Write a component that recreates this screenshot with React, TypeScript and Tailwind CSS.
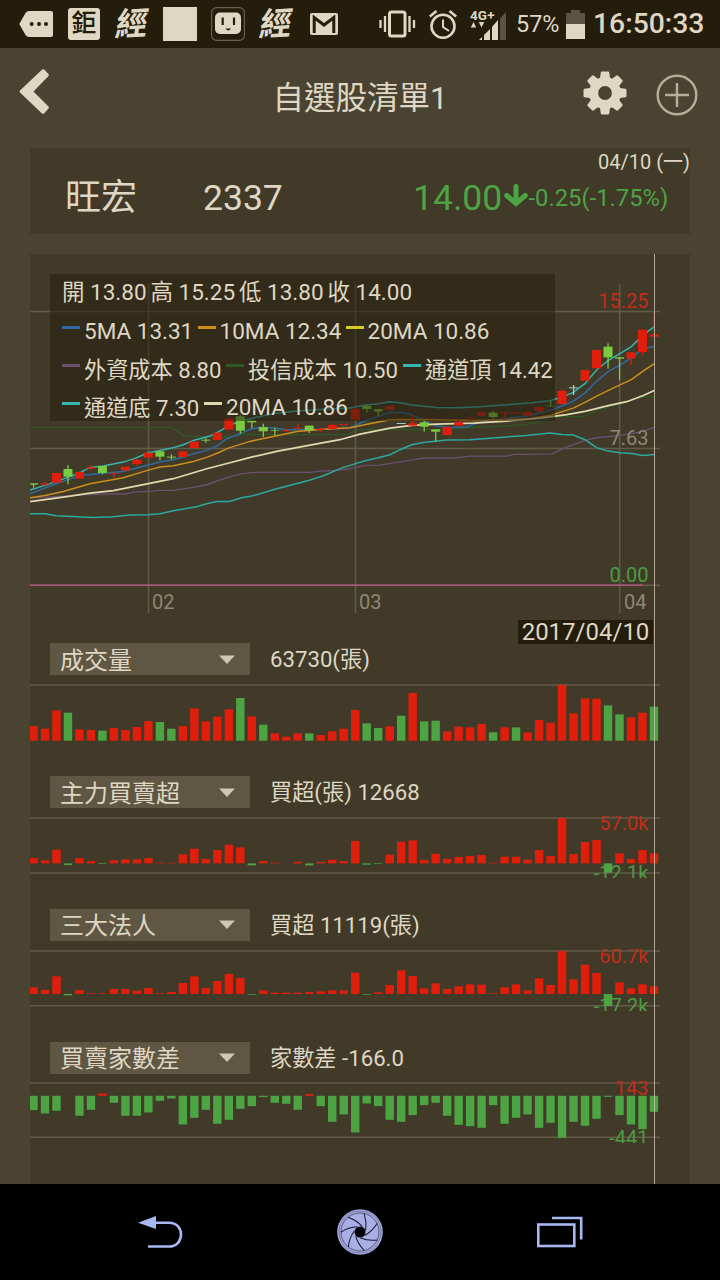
import React from "react";

type Point = [number, number];
type Candle = [color: string, bodyTop: number, bodyBottom: number, high?: number, low?: number];

const FIRST_X = 3.5;
const STEP = 11.49;
const slotX = (i: number) => FIRST_X + i * STEP;

const R = "#df1f0c";
const G = "#7acb42";
const P = "#9fcfc0";

// Winter candles and spring candles use their own vertical origin, in third-pixel units.
const WINTER: Candle[] = [
  [G, 265, 269, 265, 278], [R, 265, 268, 262, 273], [R, 234, 263], [G, 222, 245, 210, 268],
  [R, 231, 251, 229, 251], [R, 217, 221, 212, 227], [G, 213, 234, 213, 238], [R, 235, 237, 232, 247],
  [R, 215, 227], [R, 194, 207, 192, 212], [R, 173, 188], [G, 169, 185, 167, 196],
  [G, 185, 188, 178, 193], [R, 169, 186], [R, 140, 159], [G, 134, 137, 130, 143],
  [R, 113, 135], [R, 70, 104], [G, 64, 107, 60, 116], [G, 77, 82, 77, 100],
  [G, 96, 109, 86, 126], [G, 105, 107, 98, 121], [R, 105, 107, 102, 110], [R, 98, 100, 86, 108],
  [G, 92, 106, 92, 114], [R, 102, 105, 99, 110], [R, 90, 102, 87, 103], [R, 88, 91],
];
const SPRING: Candle[] = [
  [R, 386, 419], [G, 378, 387, 375, 397], [G, 388, 394, 388, 408], [R, 378, 389],
  [P, 429, 432], [R, 430, 437, 404, 437], [G, 427, 440, 422, 455], [G, 448, 455, 448, 486],
  [R, 441, 465], [R, 427, 437, 416, 437], [R, 412, 414, 411, 423], [R, 397, 407, 392, 410],
  [G, 398, 411, 394, 415], [R, 396, 399, 396, 414], [R, 397, 400], [R, 396, 407, 392, 412],
  [R, 381, 394, 376, 397], [G, 377, 379, 362, 379], [R, 333, 372, 328, 372], [P, 322, 325, 315, 345],
  [R, 270, 302], [R, 210, 265], [G, 200, 232, 190, 266], [G, 232, 236, 232, 300],
  [R, 217, 235, 217, 255], [R, 149, 216, 149, 225], [R, 163, 170, 95, 170],
];
const CANDLES: Candle[] = [
  ...WINTER.map((c) => [c[0], ...c.slice(1).map((v) => (v as number) + 345)] as Candle),
  ...SPRING,
];

const LINES: { color: string; width: number; winter: Point[]; spring: Point[] }[] = [
  {
    color: "#2d5a24", width: 1.2,
    winter: [[30, 97], [455, 97], [490, 119], [520, 124], [640, 124], [670, 118], [975, 118], [990, 113]],
    spring: [[60, 448], [150, 448], [300, 447], [420, 440], [560, 433], [650, 409], [735, 408], [770, 390], [840, 370], [908, 350], [943, 349]],
  },
  {
    color: "#6b5072", width: 1.4,
    winter: [[30, 308], [130, 302], [220, 297], [320, 295], [345, 290], [400, 287], [420, 285], [460, 285], [520, 276], [560, 268], [620, 247], [660, 236], [700, 231], [870, 231], [900, 227], [950, 225], [990, 220]],
    spring: [[75, 555], [120, 554], [250, 533], [340, 533], [390, 527], [500, 527], [525, 522], [635, 521], [670, 504], [700, 493], [735, 480], [770, 472], [840, 465], [900, 455], [943, 441]],
  },
  {
    color: "#2ba9a2", width: 1.5,
    winter: [[30, 355], [75, 355], [108, 361], [220, 366], [280, 364], [330, 359], [385, 358], [420, 355], [460, 346], [530, 334], [560, 325], [590, 318], [628, 318], [665, 307], [695, 302], [770, 280], [860, 257], [910, 241], [970, 216], [990, 210]],
    spring: [[75, 541], [115, 532], [150, 523], [180, 508], [215, 493], [250, 486], [320, 479], [390, 478], [430, 475], [560, 465], [630, 458], [665, 462], [700, 464], [735, 478], [770, 502], [805, 512], [840, 517], [875, 519], [908, 525], [943, 522]],
  },
  {
    color: "#35b5ae", width: 1.5,
    winter: [[30, 284], [75, 270], [110, 258], [180, 232], [210, 216], [250, 212], [310, 200], [345, 189], [385, 172], [420, 165], [455, 158], [490, 148], [520, 135], [570, 122], [605, 104], [630, 88], [690, 70], [760, 55], [830, 47], [900, 42], [990, 38]],
    spring: [[75, 374], [115, 370], [150, 364], [180, 367], [215, 374], [290, 381], [360, 382], [420, 379], [500, 373], [570, 368], [630, 361], [665, 350], [700, 336], [735, 310], [770, 268], [805, 240], [840, 220], [875, 198], [908, 165], [943, 139]],
  },
  {
    color: "#2f6ba0", width: 1.5,
    winter: [[30, 295], [100, 268], [180, 240], [240, 234], [310, 228], [350, 218], [385, 209], [420, 200], [455, 194], [490, 185], [520, 175], [560, 165], [590, 152], [620, 130], [660, 115], [690, 102], [720, 96], [765, 98], [800, 104], [850, 102], [900, 102], [990, 97]],
    spring: [[80, 420], [115, 408], [150, 396], [185, 396], [215, 403], [250, 420], [290, 437], [330, 441], [380, 440], [400, 432], [430, 424], [500, 414], [570, 405], [640, 387], [700, 362], [735, 338], [770, 302], [805, 273], [840, 254], [875, 232], [908, 205], [943, 198]],
  },
  {
    color: "#cc8f1c", width: 1.5,
    winter: [[30, 307], [75, 300], [130, 288], [210, 265], [310, 247], [385, 224], [420, 215], [460, 211], [520, 198], [560, 186], [595, 172], [625, 158], [690, 138], [760, 123], [830, 108], [900, 102], [990, 97]],
    spring: [[100, 428], [150, 418], [185, 417], [290, 418], [400, 420], [500, 418], [570, 414], [630, 405], [700, 383], [735, 366], [770, 347], [805, 330], [875, 297], [908, 273], [943, 250]],
  },
  {
    color: "#e3d9b0", width: 1.7,
    winter: [[30, 319], [130, 305], [210, 293], [280, 286], [385, 265], [460, 250], [560, 220], [630, 202], [700, 184], [770, 168], [870, 149], [960, 133]],
    spring: [[60, 461], [150, 443], [215, 435], [290, 431], [400, 428], [500, 422], [600, 413], [680, 403], [735, 393], [805, 376], [860, 364], [908, 346], [943, 330]],
  },
];

const linePoints = (winter: Point[], spring: Point[]) =>
  [
    ...winter.map(([x, y]) => [x / 3 - 10, (y + 345) / 3 + 26]),
    ...spring.map(([x, y]) => [x / 3 + 310, y / 3 + 26]),
  ]
    .map(([x, y]) => `${x.toFixed(1)},${(y + 0.4).toFixed(1)}`)
    .join(" ");

function PriceChart() {
  return (
    <svg width="660" height="366" viewBox="0 0 660 366" className="block">
      <g stroke="#625b48" strokeWidth="1.5">
        <path d="M0 57.500H630M0 194.500H630M0 331.300H630" />
        <path d="M118.500 30V359M325.500 30V359M589.700 30V359" />
      </g>
      {LINES.map((l, i) => (
        <polyline key={i} points={linePoints(l.winter, l.spring)} fill="none" stroke={l.color} strokeWidth={l.width} />
      ))}
      {CANDLES.map(([color, top, bottom, high, low], i) => (
        <g key={i} fill={color}>
          <rect x={slotX(i) - 4.5} width="9" y={top / 3 + 26} height={(bottom - top) / 3} />
          {high !== undefined && low !== undefined && (
            <rect x={slotX(i) - 0.6} width="1.3" y={high / 3 + 26} height={(low - high) / 3} />
          )}
        </g>
      ))}
      <path d="M0 331.300H613" stroke="#b3577c" strokeWidth="1.5" />
      <g fontSize="20" textAnchor="end">
        <text x="618.500" y="53.500" fill="#c22d18">15.25</text>
        <text x="618.500" y="191" fill="#8f8774">7.63</text>
        <text x="618.500" y="327.500" fill="#4d9a43">0.00</text>
      </g>
      <g fontSize="20" fill="#8f8774">
        <text x="122" y="354.500">02</text>
        <text x="329" y="354.500">03</text>
        <text x="594" y="354.500">04</text>
      </g>
    </svg>
  );
}

type Study = {
  name: string;
  value: string;
  base: number;
  bars: number[];
  bottomLine?: number;
  max?: string;
  min?: string;
  inverted?: boolean;
};

// Bars are third-pixel heights; the sign picks the colour and, for signed studies, the direction.
const STUDIES: Study[] = [
  {
    name: "成交量", value: "63730(張)", base: 57.7,
    bars: [44, 36, 91, -84, 34, 32, -30, 38, 32, 41, 59, -56, -36, 44, 97, 58, 72, 94, -128, 73, -48, 22, 12, 22, -22, 17, 28, 36, 92, -52, -38, 43, -75, 143, -58, -60, 28, 42, 40, 50, -25, 40, -40, 25, 62, 54, 168, 82, 127, 126, -106, -79, 70, 84, -102],
    inverted: true,
  },
  {
    name: "主力買賣超", value: "買超(張) 12668", base: 47.4, bottomLine: 57, max: "57.0k", min: "-12.1k",
    bars: [16, 9, 41, -5, 16, 7, -2, 9, 12, 12, 16, 2, 2, 27, 44, 13, 40, 56, 48, -6, 7, 2, 0, 5, -6, 4, 11, 7, 67, -4, -2, 26, 65, 69, 10, 29, 14, 19, 22, 25, 2, 20, 20, 11, 40, 22, 136, 28, 64, 70, -28, 30, 13, 40, 30],
  },
  {
    name: "三大法人", value: "買超 11119(張)", base: 45, bottomLine: 56.7, max: "60.7k", min: "-17.2k",
    bars: [20, 12, 53, -4, 12, 2, 2, 15, 15, 10, 18, 2, 6, 33, 53, 18, 39, 60, 48, -2, 11, 4, 4, 4, 6, 8, 11, 11, 64, -2, 5, 27, 71, 54, 17, 32, 15, 23, 29, 28, 2, 20, 29, 11, 47, 27, 129, 44, 88, 63, -36, 35, 17, 29, 23],
  },
  {
    name: "買賣家數差", value: "家數差 -166.0", base: 14.8, bottomLine: 56.3, max: "143", min: "-441",
    bars: [-43, -53, -45, 0, -60, -42, 7, -21, -60, -60, -50, -15, -8, -86, -66, -42, -84, -72, -39, -31, -4, -21, -24, -42, 5, -31, -78, -56, -110, -23, -31, -72, -78, -58, -28, -21, -60, -87, -91, -96, -28, -84, -66, -56, -96, -81, -126, -78, -90, -69, -3, -58, -86, -100, -48],
  },
];

function StudySection({ study }: { study: Study }) {
  return (
    <section className="h-[132.8px]">
      <div className="flex h-[41px] items-start pl-5 pt-[1.4px]">
        <button className="flex h-8 w-[200px] items-center justify-between bg-[#5f5743] pl-2.5 pr-[15px] text-2xl leading-8">
          <span className="relative top-[1.5px]">{study.name}</span>
          <svg width="16" height="9" viewBox="0 0 16 9">
            <path d="M0 .5H16L8 9Z" fill="#cfc7b3" />
          </svg>
        </button>
        <span className="ml-5 text-[22.2px] leading-[33px]">{study.value}</span>
      </div>
      <svg width="660" height="62" viewBox="0 0 660 62" className="block overflow-hidden">
        <path d="M0 2H630" stroke="#625b48" strokeWidth="1.6" />
        {study.bottomLine && <path d={`M0 ${study.bottomLine}H630`} stroke="#625b48" strokeWidth="1.6" />}
        <g fontSize="20" textAnchor="end">
          {study.max && <text x="618.500" y="14" fill="#c22d18">{study.max}</text>}
          {study.min && <text x="618.500" y="64" fill="#4d9a43">{study.min}</text>}
        </g>
        {study.bars.map((b, i) => {
          const h = Math.abs(b) / 3;
          const up = b > 0 || study.inverted;
          return (
            <rect
              key={i}
              x={slotX(i) - 4.2}
              width="8.4"
              y={up ? study.base - h : study.base}
              height={h}
              fill={b > 0 ? R : "#4da443"}
            />
          );
        })}
      </svg>
    </section>
  );
}

function Dash({ className }: { className: string }) {
  return <i className={`mt-[13px] h-[2.5px] w-[18px] shrink-0 self-start ${className}`} />;
}

function Legend() {
  return (
    <div className="absolute left-5 top-5 h-[147px] w-[505px] whitespace-nowrap bg-[#241c0b]/50 text-[22.5px] leading-9">
      <div className="flex h-[39px] pl-3">
        <span className="w-[88.5px]">開 13.80</span>
        <span className="w-[88.5px]">高 15.25</span>
        <span className="w-[88.5px]">低 13.80</span>
        <span>收 14.00</span>
      </div>
      <div className="flex h-[38px] pl-3">
        <Dash className="bg-[#2f6ba0]" />
        <span className="ml-1 w-[113.5px] leading-[37px]">5MA 13.31</span>
        <Dash className="bg-[#cc8f1c]" />
        <span className="ml-1 w-[126px] leading-[37px]">10MA 12.34</span>
        <Dash className="bg-[#d6cd25]" />
        <span className="ml-1 leading-[37px]">20MA 10.86</span>
      </div>
      <div className="flex h-[38px] pl-3">
        <Dash className="bg-[#6b5072]" />
        <span className="ml-1 w-[142px] text-[22.2px] leading-[38px]">外資成本 8.80</span>
        <Dash className="bg-[#2d5a24]" />
        <span className="ml-1 w-[155px] text-[22.2px] leading-[38px]">投信成本 10.50</span>
        <Dash className="bg-[#35b5ae]" />
        <span className="ml-1 text-[22.2px] leading-[38px]">通道頂 14.42</span>
      </div>
      <div className="flex h-8 pl-3">
        <Dash className="bg-[#35b5ae]" />
        <span className="ml-1 w-[120px] text-[22.2px] leading-[38px]">通道底 7.30</span>
        <Dash className="bg-[#e3d9b0]" />
        <span className="ml-1 leading-[37px]">20MA 10.86</span>
      </div>
    </div>
  );
}

function BrushIcon({ className }: { className: string }) {
  return (
    <span className={`w-[34px] shrink-0 -rotate-3 -skew-x-12 text-center text-[32px] font-bold leading-[48px] ${className}`}>經</span>
  );
}

function StatusBar() {
  return (
    <div className="flex h-12 items-center bg-[#241d0b] pl-[19px]">
      <svg width="34" height="26" viewBox="0 0 34 26" className="shrink-0">
        <path d="M.3 13 6.500 2Q8 0 10 0H32Q34 0 34 2V24Q34 26 32 26H10Q8 26 6.500 24Z" fill="#dfd7c3" />
        <g fill="#241d0b"><circle cx="12.700" cy="13" r="2" /><circle cx="20" cy="13" r="2" /><circle cx="27" cy="13" r="2" /></g>
      </svg>
      <span className="ml-[15px] flex h-8 w-8 shrink-0 items-center justify-center rounded-[3px] bg-[#dfd7c3] text-[25px] font-medium leading-8 text-[#241d0b]">鉅</span>
      <BrushIcon className="ml-[15px]" />
      <span className="ml-[14px] h-[34px] w-[34px] shrink-0 bg-[#dfd7c3]" />
      <svg width="34" height="34" viewBox="0 0 34 34" className="ml-[14px] shrink-0">
        <rect x=".6" y=".6" width="32.8" height="32.8" rx="5" fill="none" stroke="#6b6452" strokeWidth="1.1" />
        <rect x="4" y="5.5" width="26" height="21.500" rx="5" fill="#dfd7c3" />
        <path d="M11.7 10.5V18M23 10.5V18" stroke="#241d0b" strokeWidth="2.2" />
        <path d="M14.5 21.5H20Q17.3 25.500 14.5 21.5Z" fill="#241d0b" />
      </svg>
      <BrushIcon className="ml-[14px]" />
      <svg width="28" height="22" viewBox="0 0 28 22" className="ml-[17px] shrink-0">
        <rect width="28" height="22" rx="2" fill="#dfd7c3" />
        <path d="M4.200 20V4.500L14 12 23.800 4.500V20" fill="none" stroke="#241d0b" strokeWidth="3" />
      </svg>
      <svg width="37" height="28" viewBox="0 0 37 28" className="ml-[41px] shrink-0" fill="none" stroke="#dfd7c3">
        <rect x="10.500" y="2" width="15.5" height="24" rx="2" strokeWidth="3" />
        <path d="M6 6V22M30.500 6V22" strokeWidth="2.3" />
        <path d="M1.500 10V18M35 10V18" strokeWidth="2.3" />
      </svg>
      <svg width="28" height="29" viewBox="0 0 28 29" className="ml-[13px] shrink-0" fill="none" stroke="#dfd7c3">
        <circle cx="14" cy="16.300" r="11.500" strokeWidth="2.6" />
        <path d="M.8 6.500 7.500 1M27.200 6.500 20.500 1" strokeWidth="2.6" />
        <path d="M14 9.500V17L20 21" strokeWidth="2" />
      </svg>
      <svg width="37" height="34" viewBox="0 -2 37 34" className="ml-[13px] shrink-0">
        <text x="0" y="10.500" fontSize="13.500" fontWeight="700" fill="#dfd7c3" textLength="24.500">4G+</text>
        <path d="M.8 18.500 3.500 13 6.200 18.500ZM8.800 13H14.200L11.500 18.500Z" fill="#dfd7c3" />
        <path d="M9 31 12 28V31ZM14 31V26L20 20V31ZM22 31V18L28 11V31Z" fill="#dfd7c3" />
        <path d="M30 31V9.500L36 3V31Z" fill="#5b5442" />
      </svg>
      <span className="ml-[9px] w-[50px] shrink-0 text-[23.4px] leading-[52px]">57%</span>
      <svg width="19" height="29" viewBox="0 0 19 29" className="shrink-0">
        <path d="M0 3H5V0H14V3H19V14H0Z" fill="#5b5442" />
        <path d="M0 14H19V29H0Z" fill="#dfd7c3" />
      </svg>
      <span className="ml-[8px] text-[28.3px] font-medium leading-[52px]">16:50:33</span>
    </div>
  );
}

function Header() {
  return (
    <header className="relative flex h-[100px] justify-between">
      <svg width="32" height="48" viewBox="0 0 32 48" className="ml-[18px] mt-5">
        <path d="M24.200 1.600Q25.200 .8 26.200 1.600L30.500 6Q31.300 7 30.500 8L15.500 23.500 30.500 38.500Q31.300 39.500 30.500 40.500L26 45.500Q25 46.300 24 45.500L2 24.500Q1.100 23.500 2 22.500Z" fill="#dfd7c3" />
      </svg>
      <h1 className="absolute inset-x-0 top-[28px] text-center text-[31.5px] leading-[46px]">自選股清單1</h1>
      <div className="flex">
        <svg width="44" height="44" viewBox="-22 -22 44 44" className="mt-[22.500px]">
          <g fill="#dfd7c3">
            <circle r="16" />
            {[0, 45, 90, 135].map((a) => (
              <path key={a} transform={`rotate(${a})`} d="M-4.200-20.500Q-4-21.500-3-21.500H3Q4-21.500 4.200-20.500L5-15V15L4.200 20.500Q4 21.500 3 21.500H-3Q-4 21.500-4.200 20.500L-5 15V-15Z" />
            ))}
          </g>
          <circle r="6.900" fill="#4a4331" />
        </svg>
        <svg width="44" height="44" viewBox="-22 -22 44 44" className="ml-[28px] mr-[21.500px] mt-[25px]" fill="none" stroke="#b7ae9a" strokeWidth="2.400">
          <circle r="19.300" />
          <path d="M-12 0H12M0-12V12" />
        </svg>
      </div>
    </header>
  );
}

function NavBar() {
  return (
    <nav className="flex h-24 items-center bg-black pl-[138px]">
      <svg width="47" height="34" viewBox="0 0 47 34" className="shrink-0">
        <path d="M0 7.700 18 1V14Z" fill="#a9b7f2" />
        <path d="M17 7.700H31C47 7.700 47 31.500 31 31.500H10" fill="none" stroke="#a9b7f2" strokeWidth="2.600" />
      </svg>
      <svg width="48" height="48" viewBox="-24 -24 48 48" className="ml-[151px] shrink-0">
        <circle r="22.800" fill="#a9aee4" />
        <circle r="21" fill="none" stroke="#6c709c" strokeWidth=".9" />
        <circle r="19" fill="none" stroke="#3c3f60" strokeWidth=".8" />
        <circle r="5.500" fill="#000" />
        {[0, 1, 2, 3, 4, 5, 6].map((n) => (
          <path key={n} transform={`rotate(${(n * 360) / 7})`} d="M4-18.600Q7.200-10 5.600-1.500" fill="none" stroke="#14162a" strokeWidth="1" />
        ))}
      </svg>
      <svg width="48" height="34" viewBox="0 0 48 34" className="ml-[153px] shrink-0" fill="none" stroke="#a9b7f2" strokeWidth="2.600">
        <rect x="1.300" y="9.500" width="36" height="21.500" />
        <path d="M15 3H44.200V24.500" />
      </svg>
    </nav>
  );
}

export default function App() {
  return (
    <div className="flex h-[1280px] w-[720px] flex-col overflow-hidden bg-[#4a4331] font-[Roboto,'Noto_Sans_CJK_TC',sans-serif] text-[#dfd7c3]">
      <StatusBar />
      <Header />
      <section className="relative mx-[30px] flex h-[86px] shrink-0 bg-[#413a29] pl-[35px] pt-[23px] text-4xl leading-[54px]">
        <span className="w-[138px]">旺宏</span>
        <span className="w-[210px] text-[35.5px]">2337</span>
        <div className="flex text-[#4da443]">
          <span className="w-[89.500px] text-[35.5px]">14.00</span>
          <svg width="26" height="24" viewBox="0 0 26 24" className="mt-[12.500px]" fill="none" stroke="#4da443" strokeLinecap="round">
            <path d="M13 2.500V17" strokeWidth="5" />
            <path d="M3.700 11.500 13 19.500 22.300 11.500" strokeWidth="5" />
          </svg>
          <span className="text-[23.8px] leading-[54px]">-0.25(-1.75%)</span>
        </div>
        <span className="absolute right-0 top-0 text-[20px] leading-[29px]">04/10 (一)</span>
      </section>
      <main className="relative mx-[30px] mt-5 h-[930px] shrink-0 overflow-hidden bg-[#413a29]">
        <PriceChart />
        <Legend />
        <div className="flex h-[22px] justify-end pr-[37px]">
          <span className="h-6 w-[135px] bg-[#241d0b] text-center text-2xl leading-6">2017/04/10</span>
        </div>
        {STUDIES.map((s) => (
          <StudySection key={s.name} study={s} />
        ))}
        <span className="absolute left-[624px] top-0 h-full w-px bg-[#c9c1ad]/80" />
      </main>
      <NavBar />
    </div>
  );
}
